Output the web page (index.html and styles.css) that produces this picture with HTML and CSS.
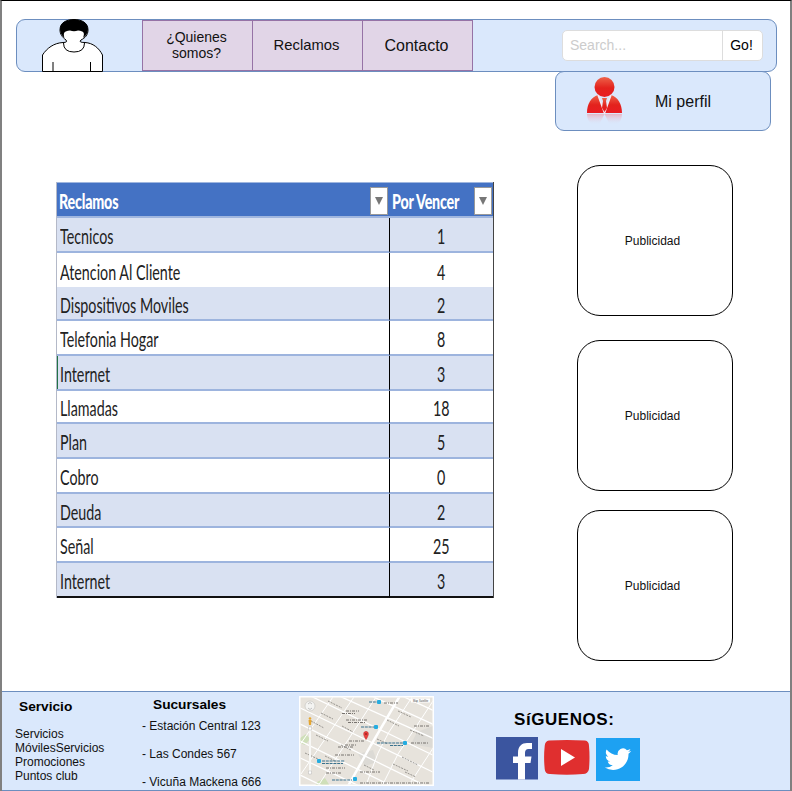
FILE: index.html
```
<!DOCTYPE html>
<html lang="es">
<head>
<meta charset="utf-8">
<title>Reclamos</title>
<link rel="stylesheet" href="styles.css">
</head>
<body>
<div class="page">
  <header class="topbar">
    <svg class="person" width="62" height="53" viewBox="0 0 62 53">
      <path d="M.5 52.500V36C5 29 12 24 21 23.500Q26 23.500 24 21C20 18 18 15 18 11C18 4 24 .500 32 .500S46 4 46 11C46 16 43 19 39 21Q36 23.500 43 23.500C51 24 57 29 60.500 36V52.500Z" fill="#fff" stroke="#000"/>
      <path d="M22.500 19C19 16 18 13 18 10C18 4 24 .500 32 .500S46 4 46 10C46 14 44 17 41 19C43 14 42 12 36 11.500Q32 13 28 11.500C22 12 21 14 22.500 19Z"/>
      <path d="M21.500 24Q21.500 33 32 33Q42.500 33 42.500 24M11 43V52M48.500 43V52" fill="none" stroke="#000"/>
    </svg>
    <nav class="tabs">
      <a class="tab tab-about">¿Quienes<br>somos?</a>
      <a class="tab tab-claims">Reclamos</a>
      <a class="tab tab-contact">Contacto</a>
    </nav>
    <div class="search"><span class="search-field">Search...</span><span class="search-go">Go!</span></div>
  </header>

  <section class="profile">
    <svg width="38" height="50" viewBox="0 0 38 50">
      <defs>
        <linearGradient id="red" x1="0" y1="0" x2="0" y2="1"><stop offset="0" stop-color="#ed6249"/><stop offset=".55" stop-color="#e3221d"/><stop offset="1" stop-color="#e91c22"/></linearGradient>
        <linearGradient id="fade" x1="0" y1="0" x2="0" y2="1"><stop offset="0" stop-color="#e8b5c4"/><stop offset="1" stop-color="#dae8fc" stop-opacity="0"/></linearGradient>
      </defs>
      <circle cx="18.500" cy="11" r="10" fill="url(#red)"/>
      <path d="M1 37C1 28 5 21 12 19L18.500 37L25 19C32 21 36 28 36 37Z" fill="url(#red)"/>
      <path d="M12 19L18.500 37L25 19" fill="none" stroke="#f5e9f2" stroke-width="1.500"/>
      <path d="M16 22H21L20 25L21 32L18.500 36L16 32L17 25Z" fill="url(#red)"/>
      <path d="M1 38H36Q36 45 31 48L24 49L18.500 38L13 49L6 48Q1 45 1 38Z" fill="url(#fade)"/>
    </svg>
    <span class="profile-name">Mi perfil</span>
  </section>

  <main class="content">
    <table class="claims">
      <thead><tr>
        <th><div class="head"><span class="squeeze">Reclamos</span><i class="filter"></i></div></th>
        <th><div class="head"><span class="squeeze">Por Vencer</span><i class="filter"></i></div></th>
      </tr></thead>
      <tbody>
        <tr class="r35"><td><span class="squeeze">Tecnicos</span></td><td><span class="squeeze">1</span></td></tr>
        <tr class="r34 plain"><td><span class="squeeze">Atencion Al Cliente</span></td><td><span class="squeeze">4</span></td></tr>
        <tr class="r34"><td><span class="squeeze">Dispositivos Moviles</span></td><td><span class="squeeze">2</span></td></tr>
        <tr class="r35"><td><span class="squeeze">Telefonia Hogar</span></td><td><span class="squeeze">8</span></td></tr>
        <tr class="r35 marked"><td><span class="squeeze">Internet</span></td><td><span class="squeeze">3</span></td></tr>
        <tr class="r33"><td><span class="squeeze">Llamadas</span></td><td><span class="squeeze">18</span></td></tr>
        <tr class="r35"><td><span class="squeeze">Plan</span></td><td><span class="squeeze">5</span></td></tr>
        <tr class="r35"><td><span class="squeeze">Cobro</span></td><td><span class="squeeze">0</span></td></tr>
        <tr class="r34"><td><span class="squeeze">Deuda</span></td><td><span class="squeeze">2</span></td></tr>
        <tr class="r35"><td><span class="squeeze">Señal</span></td><td><span class="squeeze">25</span></td></tr>
        <tr class="r35 last"><td><span class="squeeze">Internet</span></td><td><span class="squeeze">3</span></td></tr>
      </tbody>
    </table>
    <aside class="ads">
      <div class="ad">Publicidad</div>
      <div class="ad ad-mid">Publicidad</div>
      <div class="ad">Publicidad</div>
    </aside>
  </main>

  <footer class="footer">
    <section class="services">
      <h2>Servicio</h2>
      <p>Servicios<br>MóvilesServicios<br>Promociones<br>Puntos club</p>
    </section>
    <section class="branches">
      <h2>Sucursales</h2>
      <p>- Estación Central 123</p>
      <p>- Las Condes 567</p>
      <p>- Vicuña Mackena 666</p>
    </section>
    <svg class="map" width="135" height="90" viewBox="0 0 135 90">
      <rect width="135" height="90" fill="#fff"/>
      <svg x="1.500" y="1.500" width="132" height="87" viewBox="1.500 1.500 132 87">
        <rect width="135" height="90" fill="#e7e3dc"/>
        <path d="M118 36L134 30V52L112 48ZM59 58L74 54L78 66L66 70Z" fill="#dcdad5"/>
        <path d="M1 42L7 38L11 43L6 49L1 47ZM18 86L26 82L31 90H16Z" fill="#cfdfb9"/>
        <path d="M-5 -8L140 62M18 -10L140 45M55 -8L140 31M90 -6L140 17M-5 9L140 79M-5 25L135 94M-5 42L105 96M-5 59L75 97M-5 76L40 98" stroke="#fff" stroke-width="1.300" fill="none"/>
        <path d="M36 -2L-2 53M57 -2L2 78M79 -2L19 90M115 -2L90 36L79 57L66 92M134 5L99 58L82 92M138 46L108 92" stroke="#fff" stroke-width="1" fill="none"/>
        <path d="M102 -2L72 49L48 92" stroke="#fff" stroke-width="2.500" fill="none"/>
        <path d="M29 5L43 12M22 17L34 23M43 30L54 36M12 25L25 32M6 57L19 63M17 39L29 45M88 24L100 30M99 15L112 21M78 43L89 48M103 61L119 69M94 68L109 75M106 76L117 81M65 69L75 74M111 34L125 40M42 49L52 54M26 60L36 65" stroke="#96938e" stroke-width="1" stroke-dasharray="2 1" fill="none"/>
        <path d="M47 15H60M43 17.500H56M47 24H69M49 26.500H66M50 45H66M46 49H57M39 51H55M36 59H55M27 72H46M27 77H43M61 76H81M61 87H131M85 7H99M115 30H131M112 47H130" stroke="#77736f" stroke-width="1" stroke-dasharray="3 1 1 1" fill="none"/>
        <path d="M70 6H79M62 31H76M78 47H104M91 49.500H104M23 65H46M23 67.500H44M33 84H53" stroke="#39718d" stroke-width="1.100" stroke-dasharray="3 .800" fill="none"/>
        <g fill="#25ace0"><rect x="78" y="4" width="4" height="4" rx="1"/><rect x="75" y="29" width="4" height="4" rx="1"/><rect x="104" y="45" width="4" height="4" rx="1"/><rect x="18" y="63" width="4" height="4" rx="1"/><rect x="54" y="81" width="4" height="4" rx="1"/></g>
        <circle cx="11" cy="10" r="5" fill="#f4f4f2" stroke="#c8c7c3" stroke-width=".700"/>
        <path d="M9 8L11 6.500L13 8M9 12L11 13.500L13 12" fill="none" stroke="#aaa" stroke-width=".700"/>
        <path d="M11 33V78" stroke="#f8f8f6" stroke-width="2"/>
        <path d="M9.500 24H12.500L12 29H10Z" fill="#e6a62f"/><circle cx="11" cy="22.500" r="1.300" fill="#e6a62f"/>
        <path d="M9.500 31H12.500V34H9.500ZM9.500 75H12.500V78H9.500Z" fill="#fff" stroke="#aaa" stroke-width=".400"/>
        <path d="M67 43.500C64 39 64 35.500 67 35.500S70 39 67 43.500Z" fill="#e83f3b" stroke="#cc3032" stroke-width=".700"/><circle cx="67" cy="38" r=".800" fill="#6d1112"/>
        <rect x="112" y="2.500" width="19" height="4" fill="#fff"/>
        <text x="114" y="5.700" class="map-label">Map</text><text x="120" y="5.700" class="map-label">Satellite</text>
      </svg>
    </svg>
    <section class="social">
      <h2>SíGUENOS:</h2>
      <div class="networks">
        <svg width="42" height="43" viewBox="0 0 42 43"><path d="M0 0H42V42.500H0Z" fill="#3b559f"/><path d="M22 42.500V26H17V19.500H22V16C22 9 26 6 31 6H36V12H32.500Q29 12 29 16V19.500H35.500L34.500 26H29V42.500Z" fill="#fff"/></svg>
        <svg class="youtube" width="46" height="35" viewBox="0 0 46 35"><path d="M5 .500Q23-.500 41 .500Q45 1 45 6Q46 17 45 29Q44 34 39 34Q23 35.500 6 34Q1 34 .700 29Q-.500 17 .700 6Q1 1 5 .500Z" fill="#e02f2f"/><path d="M17 9V26L31 17.500Z" fill="#fff"/></svg>
        <svg class="twitter" width="44" height="43" viewBox="0 0 44 43"><path d="M0 0H44V43H0Z" fill="#1da1f2"/><path transform="translate(8.800 8) scale(1.100)" d="M23.950 4.570a10 10 0 0 1-2.820.77 4.960 4.960 0 0 0 2.160-2.720c-.95.550-2 .95-3.130 1.180a4.920 4.920 0 0 0-8.380 4.480C7.690 8.090 4.070 6.130 1.640 3.160a4.920 4.920 0 0 0 1.520 6.570 4.900 4.900 0 0 1-2.230-.61v.06a4.920 4.920 0 0 0 3.950 4.830 5 5 0 0 1-2.210.080 4.940 4.940 0 0 0 4.600 3.420A9.870 9.870 0 0 1 0 19.540a13.990 13.990 0 0 0 7.550 2.210c9.050 0 14-7.500 14-13.980 0-.21 0-.42-.02-.63a9.940 9.940 0 0 0 2.460-2.550z" fill="#fff"/></svg>
      </div>
    </section>
  </footer>
</div>
</body>
</html>
```
FILE: styles.css
```
* { box-sizing: border-box; }
body { margin: 0; font-family: "Liberation Sans", Arial, sans-serif; color: #111; background: #fff; }
h2, p { margin: 0; }
svg { display: block; flex: none; }

.page {
  width: 792px; height: 791px; overflow: hidden;
  display: flex; flex-direction: column;
  border: solid #808080; border-width: 1px 2px 0; border-top-color: #000;
}

.topbar {
  display: flex; flex: none;
  width: 761px; height: 53px; margin: 18px 0 0 14px;
  border: 1px solid #6c8ebf; border-radius: 9px; background: #dae8fc;
}
.person { margin: -1px 0 0 25px; }
.tabs { display: flex; margin-left: 38px; height: 51px; border: 1px solid #9673a6; }
.tab {
  display: flex; align-items: center; justify-content: center;
  width: 110px; padding: 0 2px 2px 0; text-align: center; line-height: 16px; background: #e1d5e7;
}
.tab + .tab { border-left: 1px solid #9673a6; }
.tab-about { width: 109px; font-size: 14px; }
.tab-claims { font-size: 14.8px; }
.tab-contact { font-size: 16px; padding-bottom: 0; }
.search {
  display: flex; align-items: center; width: 201px; height: 31px; margin: 10px 0 0 89px;
  border: 1px solid #ddd; border-radius: 5px; background: #fff; font-size: 14px;
}
.search-field { width: 160px; height: 100%; padding-left: 7px; line-height: 29px; color: #ccc; border-right: 1px solid #ddd; }
.search-go { flex: 1; padding: 0 2px 2px 0; text-align: center; color: #000; }

.profile {
  display: flex; flex: none; align-items: center;
  width: 216px; height: 60px; margin: -1px 0 0 553px; padding-left: 30px;
  border: 1px solid #6c8ebf; border-radius: 9px; background: #dae8fc;
}
.profile-name { margin: 1px 0 0 31px; font-size: 16px; }

.content { display: flex; align-items: flex-start; flex: none; height: 560px; }

.claims {
  width: 438px; margin: 51px 0 0 54px;
  border-collapse: separate; border-spacing: 0; table-layout: fixed;
  font: 21px/24px Lato, Carlito, sans-serif; color: #222;
  border-left: 1px solid #b4b9c8; border-right: 1.5px solid #444;
}
.claims th, .claims td { padding: 0; overflow: hidden; white-space: nowrap; }
.claims th:first-child { width: 333px; }
.claims th { height: 36px; background: #4472c4; border-top: 1px solid #9fb6df; border-bottom: 2px solid #a0b6df; }
.claims td { background: #d9e1f2; border-bottom: 2px solid #9db4de; text-align: center; line-height: 24px; }
.claims td:first-child { text-align: left; padding-left: 3px; border-right: 1px solid #000; }
.claims tr:nth-child(even) td { background: #fff; }
.claims .plain td { border-bottom: 0; }
.claims .last td { border-bottom: 2px solid #111; }
.claims .marked td:first-child { box-shadow: inset 1px 0 #217346; }
.r33 { height: 33px; }
.r34 { height: 34px; }
.r35 { height: 35px; }
.squeeze { display: inline-block; transform: scaleX(.68); transform-origin: left center; }
td:last-child .squeeze { transform-origin: center; }
td .squeeze { margin-top: 3px; vertical-align: top; }
.head { display: flex; align-items: center; height: 33px; padding: 3px 1px 0 2px; color: #fff; text-align: left; }
.head .squeeze { flex: 1; width: 0; font-weight: 900; letter-spacing: -.3px; }
.filter {
  display: flex; flex: none; align-items: center; justify-content: center;
  width: 18px; height: 28px; margin-right: 1px; background: #fff; border: 1px solid #999;
}
th:last-child .filter { margin-right: 0; }
.filter::after { content: ""; border: 4px solid transparent; border-top: 8px solid #777; border-bottom: 0; }

.ads { display: flex; flex-direction: column; margin: 34px 0 0 83px; }
.ad {
  display: flex; align-items: center; justify-content: center;
  width: 156px; height: 151px; padding-right: 6px; border: 1px solid #000; border-radius: 23px; font-size: 12px;
}
.ad { padding-right: 5px; }
.ad-mid { margin: 24px 0 19px; }

.footer {
  display: flex; flex: none; width: 791px; height: 100px; margin-left: -1px;
  border: 1px solid #6c8ebf; background: #dae8fc;
}
.footer h2 { color: #000; font-size: 14px; line-height: 16px; }
.services { width: 126px; padding: 7px 0 0 13px; }
.services h2 { margin-left: 4px; font-size: 13.700px; }
.services p { margin-top: 12px; font-size: 12px; line-height: 14px; }
.branches { width: 171px; padding: 5px 0 0 14px; font-size: 12px; line-height: 14px; }
.branches h2 { margin: 0 0 6px 11px; font-size: 13.700px; }
.branches p { margin-bottom: 14px; white-space: nowrap; }
.map { margin-top: 4px; }
.map-label { font-size: 2.6px; fill: #444; }
.social { margin-left: 62px; padding-top: 18px; }
.social h2 { margin-left: 18px; font-size: 17px; line-height: 20px; letter-spacing: .55px; }
.networks { display: flex; margin-top: 7px; }
.youtube { margin: 3px 6px 0; }
.twitter { margin-top: 1px; }
```
